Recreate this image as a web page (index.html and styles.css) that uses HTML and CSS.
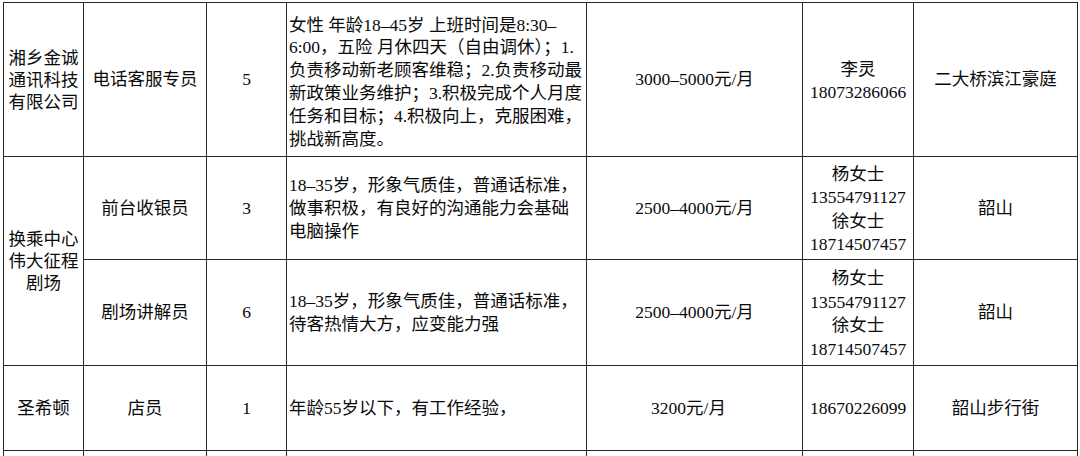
FILE: index.html
```html
<!DOCTYPE html>
<html lang="zh-CN">
<head>
<meta charset="utf-8">
<title>招聘信息</title>
<link rel="stylesheet" href="styles.css">
</head>
<body>
<table class="jobs">
  <colgroup>
    <col class="c-company">
    <col class="c-post">
    <col class="c-count">
    <col class="c-desc">
    <col class="c-pay">
    <col class="c-contact">
    <col class="c-place">
  </colgroup>
  <tbody>
    <tr class="r1">
      <td class="company">湘乡金诚<br>通讯科技<br>有限公司</td>
      <td>电话客服专员</td>
      <td>5</td>
      <td class="desc desc1">女性 年龄18–45岁 上班时间是8:30–<br>6:00，五险 月休四天（自由调休）；1.<br>负责移动新老顾客维稳；2.负责移动最<br>新政策业务维护；3.积极完成个人月度<br>任务和目标；4.积极向上，克服困难，<br>挑战新高度。</td>
      <td>3000–5000元/月</td>
      <td class="contact">李灵<br>18073286066</td>
      <td>二大桥滨江豪庭</td>
    </tr>
    <tr class="r2">
      <td class="company" rowspan="2">换乘中心<br>伟大征程<br>剧场</td>
      <td>前台收银员</td>
      <td>3</td>
      <td class="desc">18–35岁，形象气质佳，普通话标准，<br>做事积极，有良好的沟通能力会基础<br>电脑操作</td>
      <td>2500–4000元/月</td>
      <td class="contact">杨女士<br>13554791127<br>徐女士<br>18714507457</td>
      <td>韶山</td>
    </tr>
    <tr class="r3">
      <td>剧场讲解员</td>
      <td>6</td>
      <td class="desc">18–35岁，形象气质佳，普通话标准，<br>待客热情大方，应变能力强</td>
      <td>2500–4000元/月</td>
      <td class="contact">杨女士<br>13554791127<br>徐女士<br>18714507457</td>
      <td>韶山</td>
    </tr>
    <tr class="r4">
      <td>圣希顿</td>
      <td>店员</td>
      <td>1</td>
      <td class="desc">年龄55岁以下，有工作经验，</td>
      <td class="pay4">3200元/月</td>
      <td>18670226099</td>
      <td>韶山步行街</td>
    </tr>
    <tr class="r5">
      <td></td><td></td><td></td><td></td><td></td><td></td><td></td>
    </tr>
  </tbody>
</table>
</body>
</html>
```

FILE: styles.css
```css
html, body {
  margin: 0;
  padding: 0;
  background: #ffffff;
  overflow: hidden;
}

body {
  width: 1080px;
  height: 456px;
  font-family: "Liberation Serif", "Noto Sans CJK SC", serif;
  font-size: 17.5px;
  color: #0a0a0a;
}

.jobs {
  margin: 2px 0 0 3px;
  border-collapse: collapse;
  table-layout: fixed;
  width: 1074px;
}

.c-company { width: 80px; }
.c-post { width: 123px; }
.c-count { width: 80px; }
.c-desc { width: 300px; }
.c-pay { width: 216px; }
.c-contact { width: 111px; }
.c-place { width: 164px; }

.jobs td {
  border: 1.5px solid #262626;
  padding: 0 2px;
  text-align: center;
  vertical-align: middle;
  line-height: 23px;
  white-space: nowrap;
  overflow: hidden;
}

.jobs td.company {
  line-height: 22px;
  padding: 0;
}

.jobs td.desc {
  text-align: left;
  padding: 0 0 0 2px;
}

.jobs td.desc1 {
  line-height: 22.8px;
  padding-top: 5px;
}

.jobs td.contact {
  line-height: 23.5px;
  padding-top: 3px;
}

.jobs td.pay4 {
  padding-right: 14px;
}

.r1 { height: 154px; }
.r2 { height: 103px; }
.r3 { height: 106px; }
.r4 { height: 85px; }
.r5 { height: 30px; }
```
